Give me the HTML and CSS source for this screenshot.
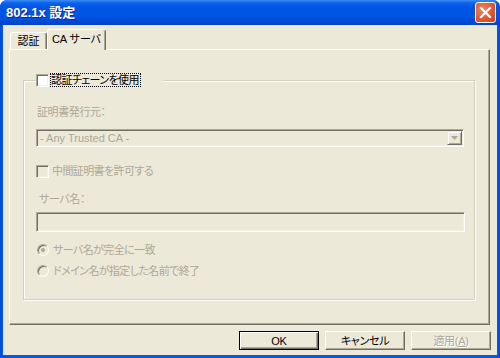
FILE: index.html
```html
<!DOCTYPE html>
<html lang="ja">
<head>
  <meta charset="UTF-8" />
  <title>802.1x 設定</title>
  <link rel="stylesheet" href="styles.css">
</head>
<body>
  <div class="window">
    <!-- Title bar -->
    <div class="titlebar">
      <span class="title">802.1x 設定</span>
      <button class="close">
        <svg width="13" height="13" viewBox="0 0 13 13">
          <path d="M2 2 L11 11 M11 2 L2 11" stroke="#fff" stroke-width="2.2" stroke-linecap="square" fill="none"/>
        </svg>
      </button>
    </div>

    <div class="client">
      <!-- Tabs -->
      <div class="tabs">
        <div class="tab">認証</div>
        <div class="tab active">CA サーバ</div>
      </div>

      <!-- Tab page -->
      <div class="panel">
        <fieldset class="group">
          <legend>
            <span class="box"></span>
            <span class="focus">認証チェーンを使用</span>
          </legend>
          <div class="label first">証明書発行元：</div>
          <div class="combo">
            <span>- Any Trusted CA -</span>
            <span class="drop">
              <svg width="7" height="4" viewBox="0 0 7 4"><path d="M0 0 H7 L3.5 4 Z" fill="#ACA899"/></svg>
            </span>
          </div>
          <div class="check"><span class="box off"></span>中間証明書を許可する</div>
          <div class="label second">サーバ名：</div>
          <div class="field"></div>
          <div class="radio first"><span class="dot on"></span>サーバ名が完全に一致</div>
          <div class="radio"><span class="dot"></span>ドメイン名が指定した名前で終了</div>
        </fieldset>
      </div>

      <!-- Dialog buttons -->
      <div class="buttons">
        <button class="btn default">OK</button>
        <button class="btn">キャンセル</button>
        <button class="btn disabled">適用(<u>A</u>)</button>
      </div>
    </div>
  </div>
</body>
</html>
```

FILE: styles.css
```css
/* Root Variables */
:root {
  --face: #ECE9D8;
  --light: #F1EFE2;
  --shadow: #ACA899;
  --dark: #716F64;
  --disabled: #ACA899;
  --ui-font: "Liberation Sans", "Noto Sans CJK JP", sans-serif;
}

* {
  margin: 0;
  padding: 0;
  box-sizing: border-box;
}
body {
  background: #fff;
  font: 11px/14px var(--ui-font);
  font-feature-settings: "palt";
  color: #000;
}

/* Window frame */
.window {
  width: 500px;
  height: 358px;
  display: flex;
  flex-direction: column;
  background: linear-gradient(90deg, #0046D6, #0058EE 2px, #0058EE 498px, #0046D6);
  border-radius: 7px 7px 0 0;
  overflow: hidden;
}
.titlebar {
  height: 25px;
  flex: none;
  display: flex;
  align-items: center;
  justify-content: space-between;
  padding: 0 4px 0 6px;
  background: linear-gradient(#3D8DF5 0, #0A62EC 3px, #0055E5 7px, #0054E3 17px, #0049D4 22px, #0042C4 25px);
}
.title {
  color: #fff;
  font: bold 13px/16px var(--ui-font);
  text-shadow: 1px 1px 0 #0B2B8C;
}
.close {
  width: 21px;
  height: 21px;
  border: 1px solid #fff;
  border-radius: 3px;
  background: radial-gradient(circle at 35% 35%, #F0865E, #E2542C 60%, #C8411E);
  display: flex;
  align-items: center;
  justify-content: center;
}

/* Client area */
.client {
  flex: 1;
  margin: 0 3px 3px;
  background: var(--face);
  display: flex;
  flex-direction: column;
  padding: 4px 7px 5px 6px;
}

/* Tabs */
.tabs {
  height: 20px;
  display: flex;
  align-items: flex-end;
  padding-left: 1px;
}
.tab {
  width: 37px;
  height: 17px;
  text-align: center;
  line-height: 16px;
  border: 1px solid;
  border-color: #fff var(--dark) transparent #fff;
  border-bottom: none;
  border-radius: 3px 3px 0 0;
  box-shadow: inset -1px 0 0 var(--shadow);
}
.tab.active {
  width: 59px;
  height: 21px;
  margin-bottom: -1px;
  line-height: 19px;
  background: var(--face);
  position: relative;
  z-index: 1;
}

/* Tab page */
.panel {
  height: 276px;
  border: 1px solid;
  border-color: #fff var(--dark) var(--dark) #fff;
  box-shadow: inset -1px -1px 0 var(--shadow);
  padding: 23px 14px 0 13px;
}

/* Group box */
.group {
  border: 1px solid #D0D0BF;
  box-shadow: 1px 1px 0 #fff, inset 1px 1px 0 #fff;
  padding: 0 10px 21px 12px;
  min-width: 0;
}
.group legend {
  height: 14px;
  display: flex;
  align-items: center;
  gap: 1px;
  padding: 0 23px 0 0;
  background: var(--face);
}
.focus {
  border: 1px dotted #000;
  line-height: 12px;
  padding: 0 1px 0 0;
  letter-spacing: -0.6px;
}

/* Checkbox and radio */
.box {
  width: 13px;
  height: 13px;
  flex: none;
  border: 1px solid;
  border-color: var(--shadow) #fff #fff var(--shadow);
  box-shadow: inset 1px 1px 0 var(--dark), inset -1px -1px 0 var(--light);
  background: #fff;
}
.box.off {
  background: var(--face);
}
.check, .radio {
  height: 14px;
  display: flex;
  align-items: center;
  color: var(--disabled);
  letter-spacing: -0.6px;
}
.check {
  margin-top: 17px;
  gap: 3px;
}
.radio {
  margin-top: 7px;
  gap: 4px;
  padding-left: 1px;
}
.radio.first {
  margin-top: 11px;
}
.dot {
  width: 12px;
  height: 12px;
  flex: none;
  border-radius: 50%;
  border: 1px solid;
  border-color: var(--shadow) #fff #fff var(--shadow);
  box-shadow: inset 1px 1px 0 var(--dark);
  background: var(--face);
  display: flex;
  align-items: center;
  justify-content: center;
}
.dot.on::after {
  content: "";
  width: 4px;
  height: 4px;
  border-radius: 50%;
  background: var(--disabled);
}

/* Labels and fields */
.label {
  color: var(--disabled);
  height: 14px;
  letter-spacing: -0.4px;
}
.label.first {
  margin-top: 18px;
  padding-left: 1px;
}
.label.second {
  margin-top: 14px;
  padding-left: 3px;
}
.combo, .field {
  border: 1px solid;
  border-color: var(--shadow) #fff #fff var(--shadow);
  box-shadow: inset 1px 1px 0 var(--dark), inset -1px -1px 0 var(--light);
}
.combo {
  height: 18px;
  margin-top: 10px;
  display: flex;
  align-items: center;
  justify-content: space-between;
  padding: 0 1px 0 3px;
  color: var(--disabled);
}
.drop {
  width: 15px;
  height: 14px;
  border: 1px solid;
  border-color: var(--face) var(--dark) var(--dark) var(--face);
  box-shadow: inset 1px 1px 0 #fff, inset -1px -1px 0 var(--shadow);
  display: flex;
  align-items: center;
  justify-content: center;
}
.field {
  height: 20px;
  margin-top: 6px;
  margin-right: -1px;
}

/* Dialog buttons */
.buttons {
  display: flex;
  justify-content: flex-end;
  gap: 6px;
  margin: 6px -1px 0 0;
}
.btn {
  width: 80px;
  height: 19px;
  font: 11px/14px var(--ui-font);
  font-feature-settings: "palt";
  letter-spacing: -0.3px;
  color: #000;
  background: var(--face);
  border: 1px solid;
  border-color: #fff var(--dark) var(--dark) #fff;
  box-shadow: inset -1px -1px 0 var(--shadow);
}
.btn.default {
  border-color: #000;
  box-shadow: inset 1px 1px 0 #fff, inset -1px -1px 0 var(--dark), inset -2px -2px 0 var(--shadow);
}
.btn.disabled {
  color: var(--disabled);
  text-shadow: 1px 1px 0 #fff;
}
```
